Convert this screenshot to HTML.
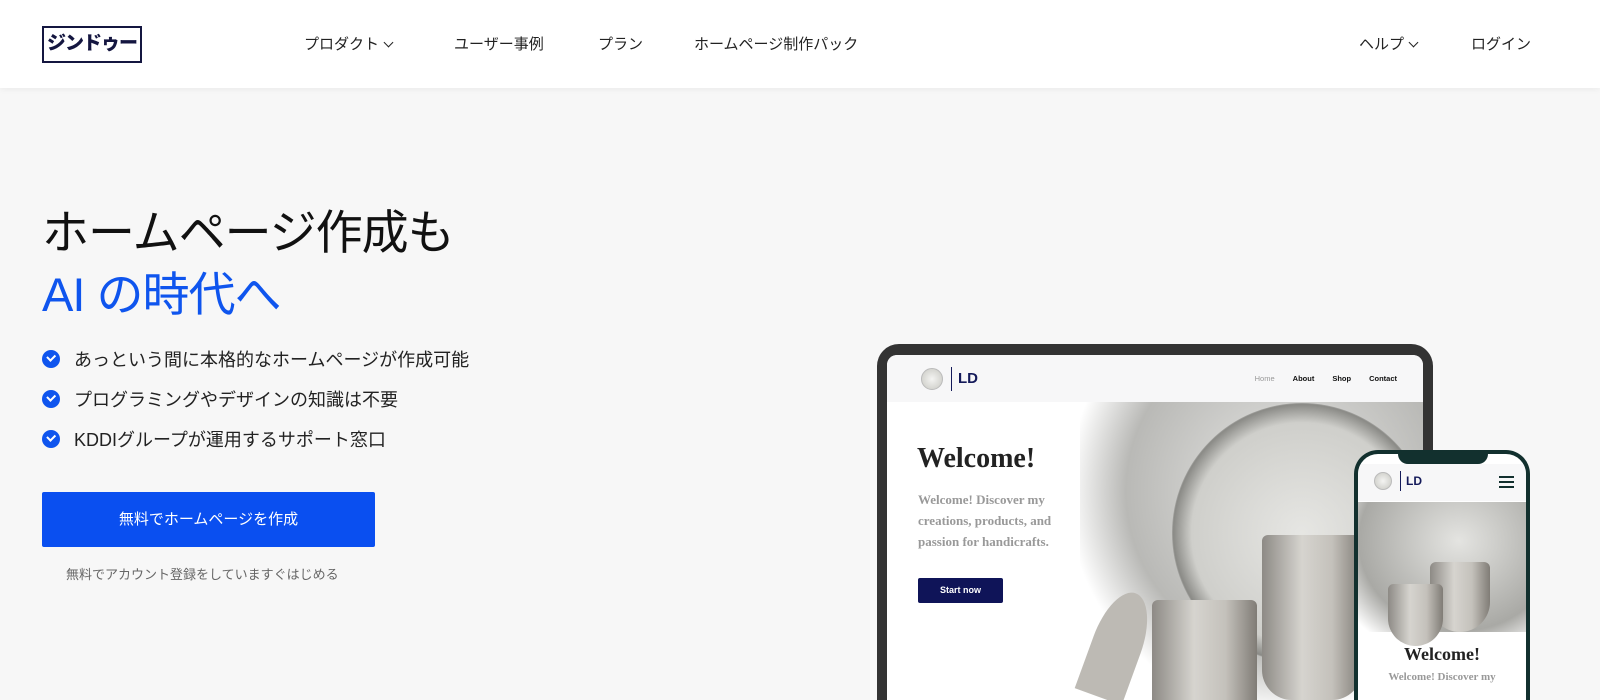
<!DOCTYPE html>
<html style="width:1600px;height:700px;overflow:hidden"><head><meta charset="utf-8">
<style>
*{margin:0;padding:0;box-sizing:border-box}
body{width:1600px;height:700px;overflow:hidden;background:#f7f7f7;font-family:"Liberation Sans","Noto Sans CJK JP",sans-serif;color:#111;position:relative}
header{position:absolute;left:0;top:0;width:1600px;height:88px;background:#fff;box-shadow:0 1px 6px rgba(0,0,0,.06)}
.logo{position:absolute;left:42px;top:26px;width:100px;height:37px;border:2.5px solid #141640;font-weight:900;font-size:19px;color:#141640;text-align:center;line-height:31px;letter-spacing:-1px;white-space:nowrap;overflow:hidden}
.nav{position:absolute;top:33px;font-size:15px;color:#222}
.chev{display:inline-block;width:7px;height:7px;border-right:1.6px solid #222;border-bottom:1.6px solid #222;transform:rotate(45deg);margin-left:6px;position:relative;top:-3px}
h1{position:absolute;left:42px;top:202px;font-size:47px;font-weight:400;line-height:62px;letter-spacing:-1px}
h1 span{color:#0f55ee}
ul{position:absolute;left:42px;top:346px;list-style:none}
li{font-size:18px;height:40px;display:flex;align-items:flex-start;color:#222}
li i{width:18px;height:18px;border-radius:50%;background:#0f55ee;margin:4px 14px 0 0;position:relative}
li i:after{content:"";position:absolute;left:5px;top:4px;width:6px;height:3.5px;border-left:2px solid #fff;border-bottom:2px solid #fff;transform:rotate(-45deg)}
.btn{position:absolute;left:42px;top:492px;width:333px;height:55px;background:#0a4ff0;color:#fff;font-size:15px;text-align:center;line-height:55px;border-radius:2px}
.sub{position:absolute;left:66px;top:564px;font-size:13px;color:#666}
.tab{position:absolute;left:877px;top:344px;width:556px;height:356px;background:#333;border-radius:22px 22px 0 0}
.scr{position:absolute;left:10px;top:11px;width:536px;height:345px;background:#fff;border-radius:10px 10px 0 0;overflow:hidden}
.tnav{height:47px;background:#f7f7f8;position:relative}
.circ{position:absolute;border-radius:50%;background:radial-gradient(#f4f4f2,#c8c8c2);border:1px solid #bbb}
.ld{position:absolute;color:#141a5a;font-weight:700;border-left:1.5px solid #141a5a}
.tlinks{position:absolute;right:26px;top:19px;font-size:7.5px;font-weight:700;color:#111}
.tlinks span{margin-left:18px}
.img{position:absolute;background:radial-gradient(ellipse at 60% 30%,#e8e8e6,#b9b9b6 55%,#fff 75%)}
.pot{position:absolute;background:linear-gradient(90deg,#8d8a85,#d6d4cf 40%,#c4c1bb 70%,#807c76);border-radius:6px 6px 30px 30px}
.ph{position:absolute;left:1354px;top:450px;width:176px;height:250px;border:4px solid #12302e;border-bottom:0;border-radius:24px 24px 0 0;background:#fff;overflow:hidden}
.notch{position:absolute;left:40px;top:-4px;width:90px;height:14px;background:#12302e;border-radius:0 0 10px 10px}
.serif{font-family:"Liberation Serif",serif}
</style></head><body>
<header>
<div class="logo">ジンドゥー</div>
<div class="nav" style="left:304px">プロダクト<span class="chev"></span></div>
<div class="nav" style="left:454px">ユーザー事例</div>
<div class="nav" style="left:598px">プラン</div>
<div class="nav" style="left:694px">ホームページ制作パック</div>
<div class="nav" style="left:1359px">ヘルプ<span class="chev"></span></div>
<div class="nav" style="left:1471px">ログイン</div>
</header>
<h1>ホームページ作成も<br><span>AI の時代へ</span></h1>
<ul>
<li><i></i>あっという間に本格的なホームページが作成可能</li>
<li><i></i>プログラミングやデザインの知識は不要</li>
<li><i></i>KDDIグループが運用するサポート窓口</li>
</ul>
<div class="btn">無料でホームページを作成</div>
<div class="sub">無料でアカウント登録をしていますぐはじめる</div>
<div class="tab"><div class="scr">
<div class="tnav"><div class="circ" style="left:34px;top:13px;width:22px;height:22px"></div><div class="ld" style="left:64px;top:12px;font-size:15px;padding-left:6px;line-height:24px">LD</div>
<div class="tlinks"><span style="color:#999;font-weight:400">Home</span><span>About</span><span>Shop</span><span>Contact</span></div></div>
<div class="img" style="left:193px;top:47px;width:343px;height:298px"></div>
<div style="position:absolute;left:285px;top:48px;width:260px;height:260px;border-radius:50%;background:radial-gradient(#e6e6e3,#cfcfcb 60%,#8a8a86 70%,#fff 73%);"></div>
<div class="pot" style="left:375px;top:180px;width:100px;height:165px"></div>
<div class="pot" style="left:265px;top:245px;width:105px;height:100px;border-radius:6px 6px 0 0"></div>
<div style="position:absolute;left:205px;top:235px;width:50px;height:110px;background:#bdbab4;border-radius:50% 50% 0 0;transform:rotate(20deg)"></div>
<div class="serif" style="position:absolute;left:30px;top:88px;font-size:28px;font-weight:700;color:#222">Welcome!</div>
<div class="serif" style="position:absolute;left:31px;top:134px;font-size:13px;color:#999;line-height:21px;font-weight:700">Welcome! Discover my<br>creations, products, and<br>passion for handicrafts.</div>
<div style="position:absolute;left:31px;top:223px;width:85px;height:25px;background:#0f1458;color:#fff;font-size:9px;font-weight:700;text-align:center;line-height:25px;border-radius:2px">Start now</div>
</div></div>
<div class="ph"><div class="notch"></div>
<div style="position:absolute;left:0;top:10px;width:168px;height:37px;background:#f7f7f8"></div>
<div class="circ" style="left:16px;top:18px;width:18px;height:18px"></div>
<div class="ld" style="left:42px;top:17px;font-size:12px;padding-left:5px;line-height:20px">LD</div>
<div style="position:absolute;left:141px;top:22px;width:15px;height:12px;border-top:2px solid #12302e;border-bottom:2px solid #12302e"><div style="margin-top:3px;height:2px;background:#12302e"></div></div>
<div class="img" style="left:0;top:48px;width:168px;height:130px;background:radial-gradient(ellipse at 60% 30%,#e4e4e1,#a9a9a5 70%,#fff 95%)"></div>
<div class="pot" style="left:72px;top:108px;width:60px;height:70px"></div>
<div class="pot" style="left:30px;top:130px;width:55px;height:62px"></div>
<div class="serif" style="position:absolute;left:0;width:168px;text-align:center;top:190px;font-size:18px;font-weight:700;color:#222">Welcome!</div>
<div class="serif" style="position:absolute;left:0;width:168px;text-align:center;top:217px;font-size:11px;font-weight:700;color:#999">Welcome! Discover my</div>
</div>
</body></html>
